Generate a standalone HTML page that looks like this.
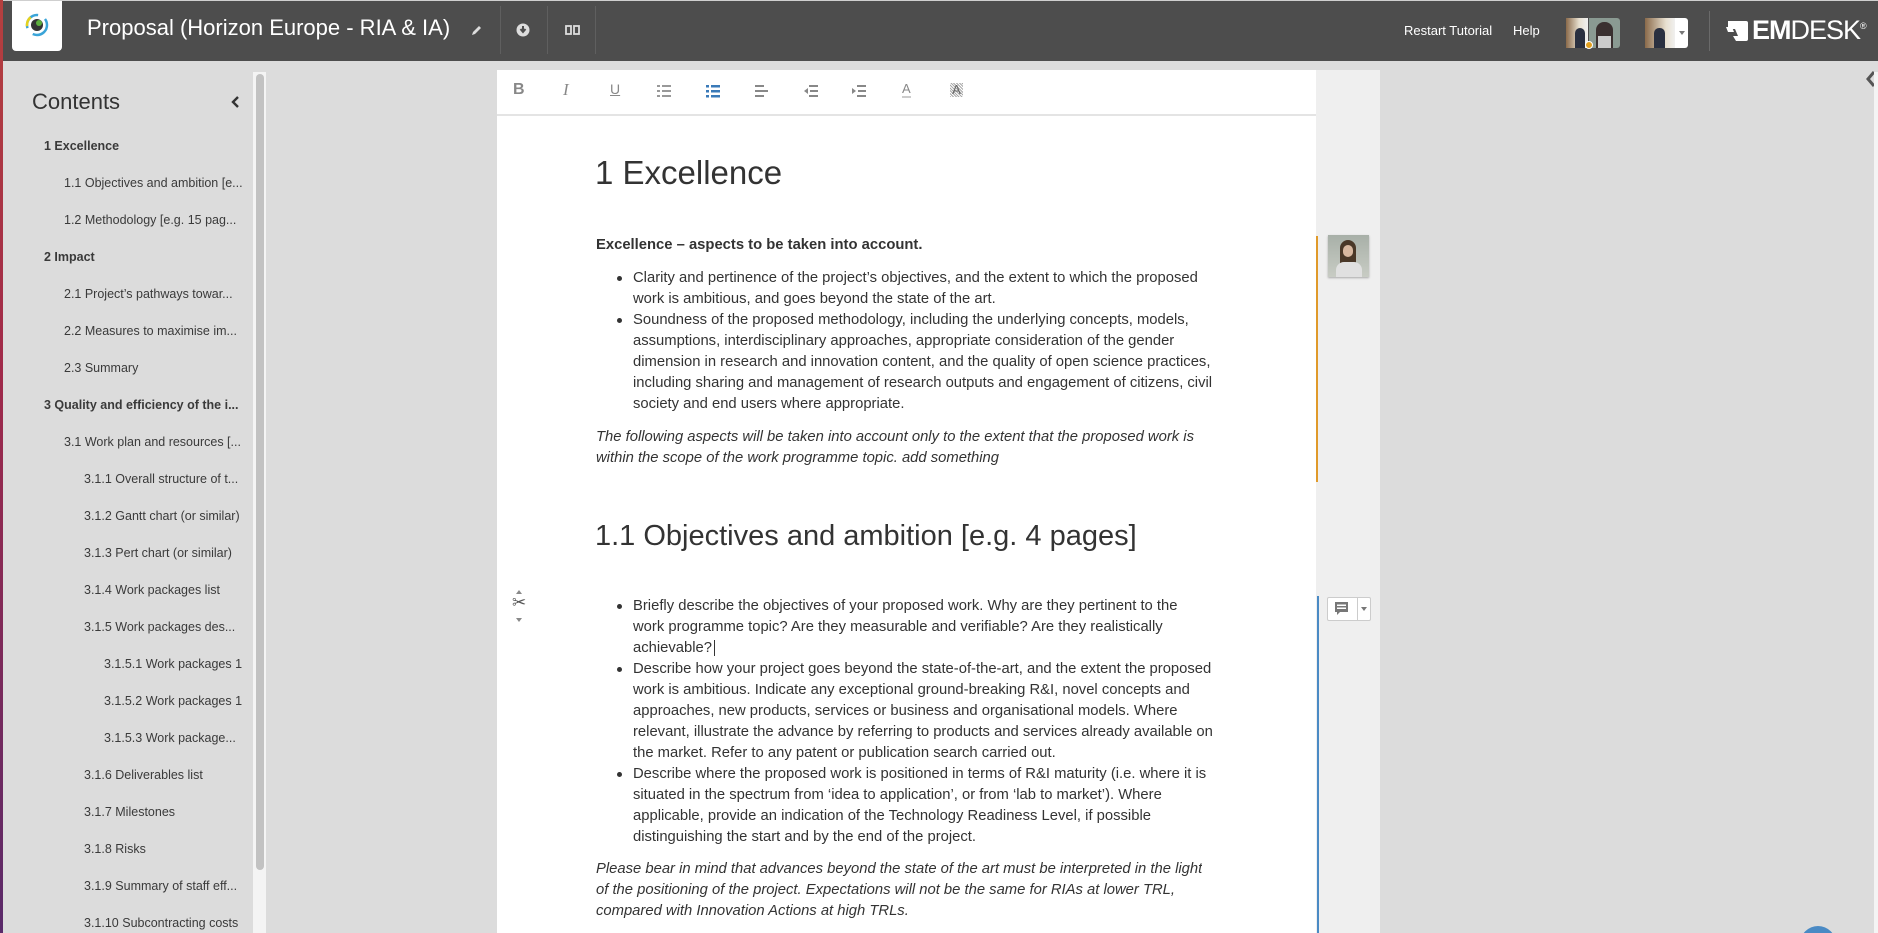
<!DOCTYPE html>
<html style="overflow:hidden;width:1878px;height:933px"><head><meta charset="utf-8"><style>
*{margin:0;padding:0;box-sizing:border-box}
body{width:1878px;height:933px;overflow:hidden;background:#dcdcdc;font-family:"Liberation Sans",sans-serif;position:relative;color:#333}
.abs{position:absolute}
#hdr{left:0;top:0;width:1878px;height:61px;background:#4d4d4d;border-top:1px solid #cfcfcf}
#edge{left:0;top:0;width:3px;height:933px;background:linear-gradient(#b5403f,#a02a4a 40%,#5a2a6a)}
.sep{width:1px;height:48px;top:6px;background:#5f5f5f}
.toc{position:absolute;font-size:12.5px;color:#3a3a3a;white-space:nowrap;line-height:16px}
.toc.b{font-weight:bold}
.doc{font-size:14.8px;color:#333;line-height:21px;white-space:nowrap}
.dot{position:absolute;left:-16px;top:8px;width:5px;height:5px;border-radius:50%;background:#333}
.ti{position:absolute;top:82px}
</style></head><body>
<div id="hdr" class="abs"></div>
<div id="edge" class="abs"></div>
<div class="abs" style="left:12px;top:1px;width:50px;height:50px;background:#fff;border-radius:0 0 4px 4px"></div>
<svg class="abs" style="left:24px;top:12px" width="26" height="26" viewBox="0 0 26 26"><circle cx="13" cy="13" r="10" fill="none" stroke="#3aa4d8" stroke-width="2.5" stroke-dasharray="20 8"/><circle cx="13" cy="13" r="10" fill="none" stroke="#e6d21c" stroke-width="2.5" stroke-dasharray="10 50" stroke-dashoffset="-30"/><circle cx="13" cy="13" r="6" fill="#333"/><circle cx="15" cy="11" r="3" fill="#5cae3c"/></svg>
<div class="abs" style="left:87px;top:15px;font-size:22px;color:#fff;white-space:nowrap">Proposal (Horizon Europe - RIA &amp; IA)</div>
<svg class="abs" style="left:470px;top:24px" width="13" height="13" viewBox="0 0 13 13"><path d="M2 11 L3 8 L9 2 L11 4 L5 10 Z" fill="#ddd"/></svg>
<div class="abs sep" style="left:500px"></div>
<svg class="abs" style="left:516px;top:23px" width="14" height="14" viewBox="0 0 14 14"><circle cx="7" cy="7" r="6.5" fill="#ddd"/><path d="M7 3v5M4.5 6l2.5 3 2.5-3" stroke="#4d4d4d" stroke-width="2" fill="none"/></svg>
<div class="abs sep" style="left:547px"></div>
<svg class="abs" style="left:565px;top:25px" width="15" height="10" viewBox="0 0 15 10"><rect x="1" y="1" width="5" height="8" fill="none" stroke="#ddd" stroke-width="1.8"/><rect x="9" y="1" width="5" height="8" fill="none" stroke="#ddd" stroke-width="1.8"/></svg>
<div class="abs sep" style="left:595px"></div>
<div class="abs" style="left:1404px;top:23px;font-size:13px;color:#fff">Restart Tutorial</div>
<div class="abs" style="left:1513px;top:23px;font-size:13px;color:#fff">Help</div>
<div class="abs" style="left:1566px;top:18px;width:22px;height:30px;background:linear-gradient(90deg,#8a6a4a,#e8e0d0 60%,#f0f0f0)"></div>
<div class="abs" style="left:1575px;top:28px;width:10px;height:20px;background:#2a3040;border-radius:5px 5px 0 0"></div>
<div class="abs" style="left:1589px;top:18px;width:31px;height:30px;background:#8a9a92;border-radius:0 3px 3px 0"></div>
<div class="abs" style="left:1596px;top:22px;width:17px;height:26px;background:#3a3030;border-radius:8px 8px 0 0"></div>
<div class="abs" style="left:1598px;top:36px;width:13px;height:12px;background:#ccc"></div>
<div class="abs" style="left:1585px;top:41px;width:8px;height:8px;border-radius:50%;background:#e2a020;border:1px solid #fff"></div>
<div class="abs" style="left:1645px;top:18px;width:30px;height:30px;background:linear-gradient(90deg,#8a6a4a,#e8e0d0 70%,#f0f0f0)"></div>
<div class="abs" style="left:1654px;top:28px;width:11px;height:20px;background:#2a3040;border-radius:5px 5px 0 0"></div>
<div class="abs" style="left:1675px;top:18px;width:13px;height:30px;background:#fff;border-radius:0 3px 3px 0"></div>
<div class="abs" style="left:1679px;top:31px;border:3px solid transparent;border-top:4px solid #777"></div>
<div class="abs sep" style="left:1709px;top:11px;height:40px;background:#6a6a6a"></div>
<svg class="abs" style="left:1725px;top:19px" width="24" height="24" viewBox="0 0 24 24"><path d="M3 2h18a2 2 0 0 1 2 2v16a2 2 0 0 1-2 2H11l-3-5h5l-3-7H3z" fill="#fff"/><path d="M1 8h6l2 5H3z" fill="#fff"/></svg>
<div class="abs" style="left:1752px;top:15px;font-size:27px;color:#fff;letter-spacing:-1px;white-space:nowrap"><b>EM</b>DESK<sup style="font-size:9px">®</sup></div>

<div class="abs" style="left:32px;top:89px;font-size:22px;color:#333">Contents</div>
<svg class="abs" style="left:230px;top:96px" width="10" height="12" viewBox="0 0 10 12"><path d="M8 1L3 6l5 5" stroke="#333" stroke-width="2.4" fill="none"/></svg>
<div class="abs" style="left:253px;top:72px;width:13px;height:861px;background:#f4f4f4"></div>
<div class="abs" style="left:256px;top:74px;width:8px;height:796px;background:#c2c2c2;border-radius:4px"></div>
<div class="toc b" style="left:44px;top:138px">1 Excellence</div>
<div class="toc" style="left:64px;top:175px">1.1 Objectives and ambition [e...</div>
<div class="toc" style="left:64px;top:212px">1.2 Methodology [e.g. 15 pag...</div>
<div class="toc b" style="left:44px;top:249px">2 Impact</div>
<div class="toc" style="left:64px;top:286px">2.1 Project’s pathways towar...</div>
<div class="toc" style="left:64px;top:323px">2.2 Measures to maximise im...</div>
<div class="toc" style="left:64px;top:360px">2.3 Summary</div>
<div class="toc b" style="left:44px;top:397px">3 Quality and efficiency of the i...</div>
<div class="toc" style="left:64px;top:434px">3.1 Work plan and resources [...</div>
<div class="toc" style="left:84px;top:471px">3.1.1 Overall structure of t...</div>
<div class="toc" style="left:84px;top:508px">3.1.2 Gantt chart (or similar)</div>
<div class="toc" style="left:84px;top:545px">3.1.3 Pert chart (or similar)</div>
<div class="toc" style="left:84px;top:582px">3.1.4 Work packages list</div>
<div class="toc" style="left:84px;top:619px">3.1.5 Work packages des...</div>
<div class="toc" style="left:104px;top:656px">3.1.5.1 Work packages 1</div>
<div class="toc" style="left:104px;top:693px">3.1.5.2 Work packages 1</div>
<div class="toc" style="left:104px;top:730px">3.1.5.3 Work package...</div>
<div class="toc" style="left:84px;top:767px">3.1.6 Deliverables list</div>
<div class="toc" style="left:84px;top:804px">3.1.7 Milestones</div>
<div class="toc" style="left:84px;top:841px">3.1.8 Risks</div>
<div class="toc" style="left:84px;top:878px">3.1.9 Summary of staff eff...</div>
<div class="toc" style="left:84px;top:915px">3.1.10 Subcontracting costs</div>

<div class="abs" style="left:1316px;top:70px;width:64px;height:863px;background:#efefef"></div>
<div class="abs" style="left:1316px;top:236px;width:2px;height:246px;background:#e09a2a"></div>
<div class="abs" style="left:1328px;top:235px;width:41px;height:42px;background:linear-gradient(#a8b0a8,#c8ccc4);box-shadow:0 1px 2px rgba(0,0,0,.3)"></div>
<div class="abs" style="left:1340px;top:240px;width:16px;height:26px;background:#4a3828;border-radius:8px 8px 2px 2px"></div>
<div class="abs" style="left:1343px;top:245px;width:10px;height:12px;background:#d8b8a0;border-radius:5px"></div>
<div class="abs" style="left:1336px;top:262px;width:26px;height:15px;background:#e0e0e0;border-radius:8px 8px 0 0"></div>
<div class="abs" style="left:1317px;top:596px;width:2px;height:337px;background:#4a8ac4"></div>
<div class="abs" style="left:1327px;top:597px;width:44px;height:24px;background:#fff;border:1px solid #ccc;border-radius:2px"></div>
<div class="abs" style="left:1357px;top:597px;width:1px;height:24px;background:#ccc"></div>
<svg class="abs" style="left:1334px;top:601px" width="15" height="15" viewBox="0 0 15 15"><rect x="1" y="1" width="13" height="10" fill="#777"/><path d="M3 11v3l3-3" fill="#777"/><rect x="3" y="3.5" width="9" height="1.5" fill="#fff"/><rect x="3" y="6.5" width="9" height="1.5" fill="#fff"/></svg>
<div class="abs" style="left:1361px;top:607px;border:3px solid transparent;border-top:4px solid #777"></div>
<svg class="abs" style="left:1864px;top:70px" width="12" height="18" viewBox="0 0 12 18"><path d="M10 2L4 9l6 7" stroke="#555" stroke-width="3" fill="none"/></svg>
<div class="abs" style="left:1874px;top:72px;width:4px;height:861px;background:#f4f4f4"></div>
<div class="abs" style="left:1800px;top:926px;width:36px;height:7px;overflow:hidden"><div style="width:36px;height:36px;border-radius:50%;background:#4a8ac4"></div></div>

<div class="abs" style="left:497px;top:70px;width:819px;height:863px;background:#fff"></div>
<div class="abs" style="left:497px;top:114px;width:819px;height:2px;background:#e4e4e4"></div>
<div class="ti" style="left:513px;font-weight:bold;color:#888;font-size:16px;top:81px">B</div>
<div class="ti" style="left:563px;font-style:italic;color:#888;font-size:17px;top:80px;font-family:'Liberation Serif',serif">I</div>
<div class="ti" style="left:610px;color:#888;font-size:14px;top:81px;text-decoration:underline">U</div>
<svg class="abs" style="left:657px;top:84px" width="14" height="14" viewBox="0 0 14 14"><g fill="#999"><rect x="0" y="1" width="3" height="2"/><rect x="0" y="6" width="3" height="2"/><rect x="0" y="11" width="3" height="2"/><rect x="5" y="1" width="9" height="2"/><rect x="5" y="6" width="9" height="2"/><rect x="5" y="11" width="9" height="2"/></g></svg>
<svg class="abs" style="left:706px;top:84px" width="14" height="14" viewBox="0 0 14 14"><g fill="#3a7ab8"><rect x="0" y="1" width="3" height="2.5"/><rect x="0" y="6" width="3" height="2.5"/><rect x="0" y="11" width="3" height="2.5"/><rect x="5" y="1" width="9" height="2.5"/><rect x="5" y="6" width="9" height="2.5"/><rect x="5" y="11" width="9" height="2.5"/></g></svg>
<svg class="abs" style="left:755px;top:84px" width="14" height="14" viewBox="0 0 14 14"><g fill="#888"><rect x="0" y="1" width="9" height="2"/><rect x="0" y="6" width="13" height="2"/><rect x="0" y="11" width="9" height="2"/></g></svg>
<svg class="abs" style="left:804px;top:84px" width="14" height="14" viewBox="0 0 14 14"><g fill="#888"><path d="M0 7l4-3v6z"/><rect x="5" y="1" width="9" height="2"/><rect x="6" y="6" width="8" height="2"/><rect x="5" y="11" width="9" height="2"/></g></svg>
<svg class="abs" style="left:852px;top:84px" width="14" height="14" viewBox="0 0 14 14"><g fill="#888"><path d="M0 4l4 3-4 3z"/><rect x="5" y="1" width="9" height="2"/><rect x="6" y="6" width="8" height="2"/><rect x="5" y="11" width="9" height="2"/></g></svg>
<div class="ti" style="left:902px;color:#888;font-size:13px;top:82px;border-bottom:2px solid #ccc;line-height:14px">A</div>
<div class="ti" style="left:950px;color:#666;font-size:13px;top:83px;line-height:14px;background:repeating-linear-gradient(45deg,#aaa 0 1px,#fff 1px 2px);width:13px;text-align:center">A</div>

<div class="abs" style="left:595px;top:154px;font-size:33px;color:#333;white-space:nowrap">1 Excellence</div>
<div class="abs doc" style="left:596px;top:235px;font-weight:bold">Excellence – aspects to be taken into account.</div>
<div class="abs doc" style="left:633px;top:268px"><span class="dot"></span>Clarity and pertinence of the project’s objectives, and the extent to which the proposed<br>work is ambitious, and goes beyond the state of the art.</div>
<div class="abs doc" style="left:633px;top:310px"><span class="dot"></span>Soundness of the proposed methodology, including the underlying concepts, models,<br>assumptions, interdisciplinary approaches, appropriate consideration of the gender<br>dimension in research and innovation content, and the quality of open science practices,<br>including sharing and management of research outputs and engagement of citizens, civil<br>society and end users where appropriate.</div>
<div class="abs doc" style="left:596px;top:427px;font-style:italic">The following aspects will be taken into account only to the extent that the proposed work is<br>within the scope of the work programme topic. add something</div>
<div class="abs" style="left:595px;top:520px;font-size:29px;color:#333;white-space:nowrap">1.1 Objectives and ambition [e.g. 4 pages]</div>

<div class="abs" style="left:516px;top:587px;border:3px solid transparent;border-bottom:4px solid #888"></div>
<div class="abs" style="left:512px;top:593px;font-size:17px;color:#555">✂</div>
<div class="abs" style="left:516px;top:618px;border:3px solid transparent;border-top:4px solid #888"></div>

<div class="abs doc" style="left:633px;top:596px"><span class="dot"></span>Briefly describe the objectives of your proposed work. Why are they pertinent to the<br>work programme topic? Are they measurable and verifiable? Are they realistically<br>achievable?<span style="border-left:1px solid #333;margin-left:2px"></span></div>
<div class="abs doc" style="left:633px;top:659px"><span class="dot"></span>Describe how your project goes beyond the state-of-the-art, and the extent the proposed<br>work is ambitious. Indicate any exceptional ground-breaking R&amp;I, novel concepts and<br>approaches, new products, services or business and organisational models. Where<br>relevant, illustrate the advance by referring to products and services already available on<br>the market. Refer to any patent or publication search carried out.</div>
<div class="abs doc" style="left:633px;top:764px"><span class="dot"></span>Describe where the proposed work is positioned in terms of R&amp;I maturity (i.e. where it is<br>situated in the spectrum from ‘idea to application’, or from ‘lab to market’). Where<br>applicable, provide an indication of the Technology Readiness Level, if possible<br>distinguishing the start and by the end of the project.</div>
<div class="abs doc" style="left:596px;top:859px;font-style:italic;height:74px;overflow:hidden">Please bear in mind that advances beyond the state of the art must be interpreted in the light<br>of the positioning of the project. Expectations will not be the same for RIAs at lower TRL,<br>compared with Innovation Actions at high TRLs.</div>
</body></html>
